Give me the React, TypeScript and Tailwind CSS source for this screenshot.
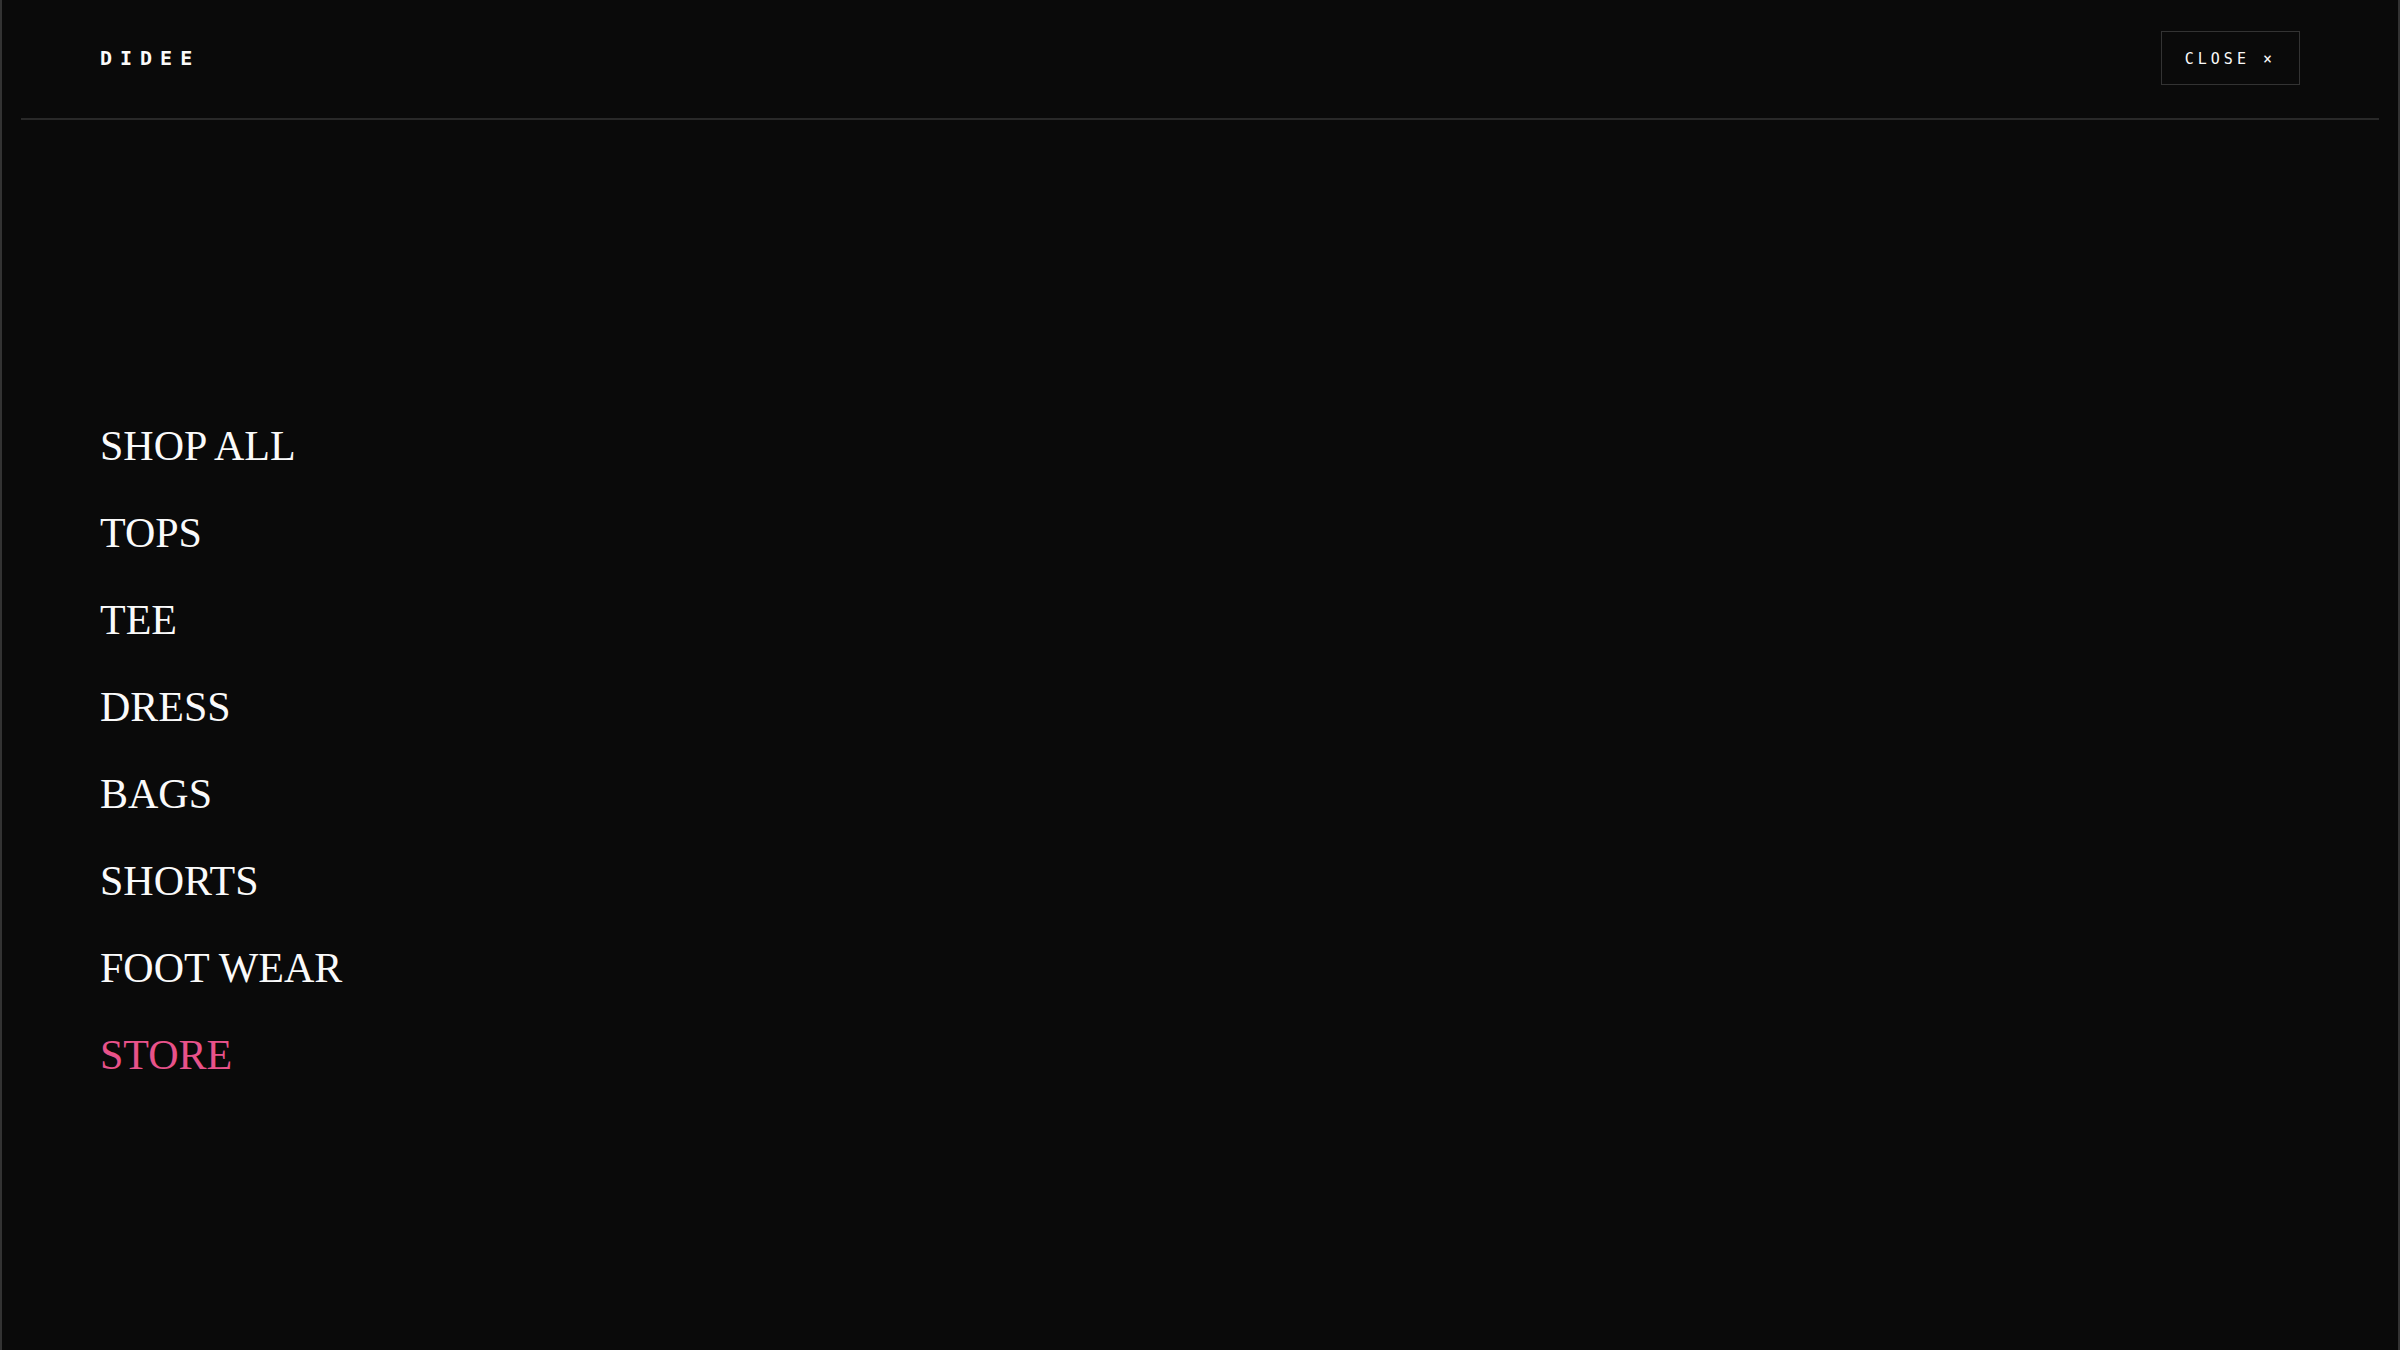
import React from 'react';

interface MenuItem {
  label: string;
  href: string;
  accent?: boolean;
}

const MENU_ITEMS: MenuItem[] = [
  { label: 'SHOP ALL', href: '#shop-all' },
  { label: 'TOPS', href: '#tops' },
  { label: 'TEE', href: '#tee' },
  { label: 'DRESS', href: '#dress' },
  { label: 'BAGS', href: '#bags' },
  { label: 'SHORTS', href: '#shorts' },
  { label: 'FOOT WEAR', href: '#foot-wear' },
  { label: 'STORE', href: '#store', accent: true }
];

const MenuHeader: React.FC = () => (
  <header className="mx-[19px] flex items-start justify-between border-b-2 border-[#292929] px-[79px] pt-[31px] pb-[33px] font-['DejaVu_Sans_Mono',monospace]">
    <a href="#home" className="flex h-[54px] items-center text-[20px] font-bold tracking-[8px]">
      DIDEE
    </a>
    <button
      type="button"
      className="h-[54px] border border-[#333333] px-[23px] pt-[2px] text-[15px] tracking-[4px] hover:border-white"
    >
      CLOSE ×
    </button>
  </header>
);

export default function App() {
  return (
    <div className="flex min-h-screen flex-col border-x-2 border-[#333333] bg-[#0a0a0a] text-[#fafafa]">
      <MenuHeader />

      <nav className="flex grow flex-col justify-center px-[98px] pt-8 font-['Liberation_Serif',serif]">
        <ul className="flex flex-col gap-8">
          {MENU_ITEMS.map(item => (
            <li key={item.label} className="text-[42px] leading-[55px]">
              <a
                href={item.href}
                className={item.accent ? 'text-[#e8528a]' : 'hover:text-[#e8528a]'}
              >
                {item.label}
              </a>
            </li>
          ))}
        </ul>
      </nav>
    </div>
  );
}
